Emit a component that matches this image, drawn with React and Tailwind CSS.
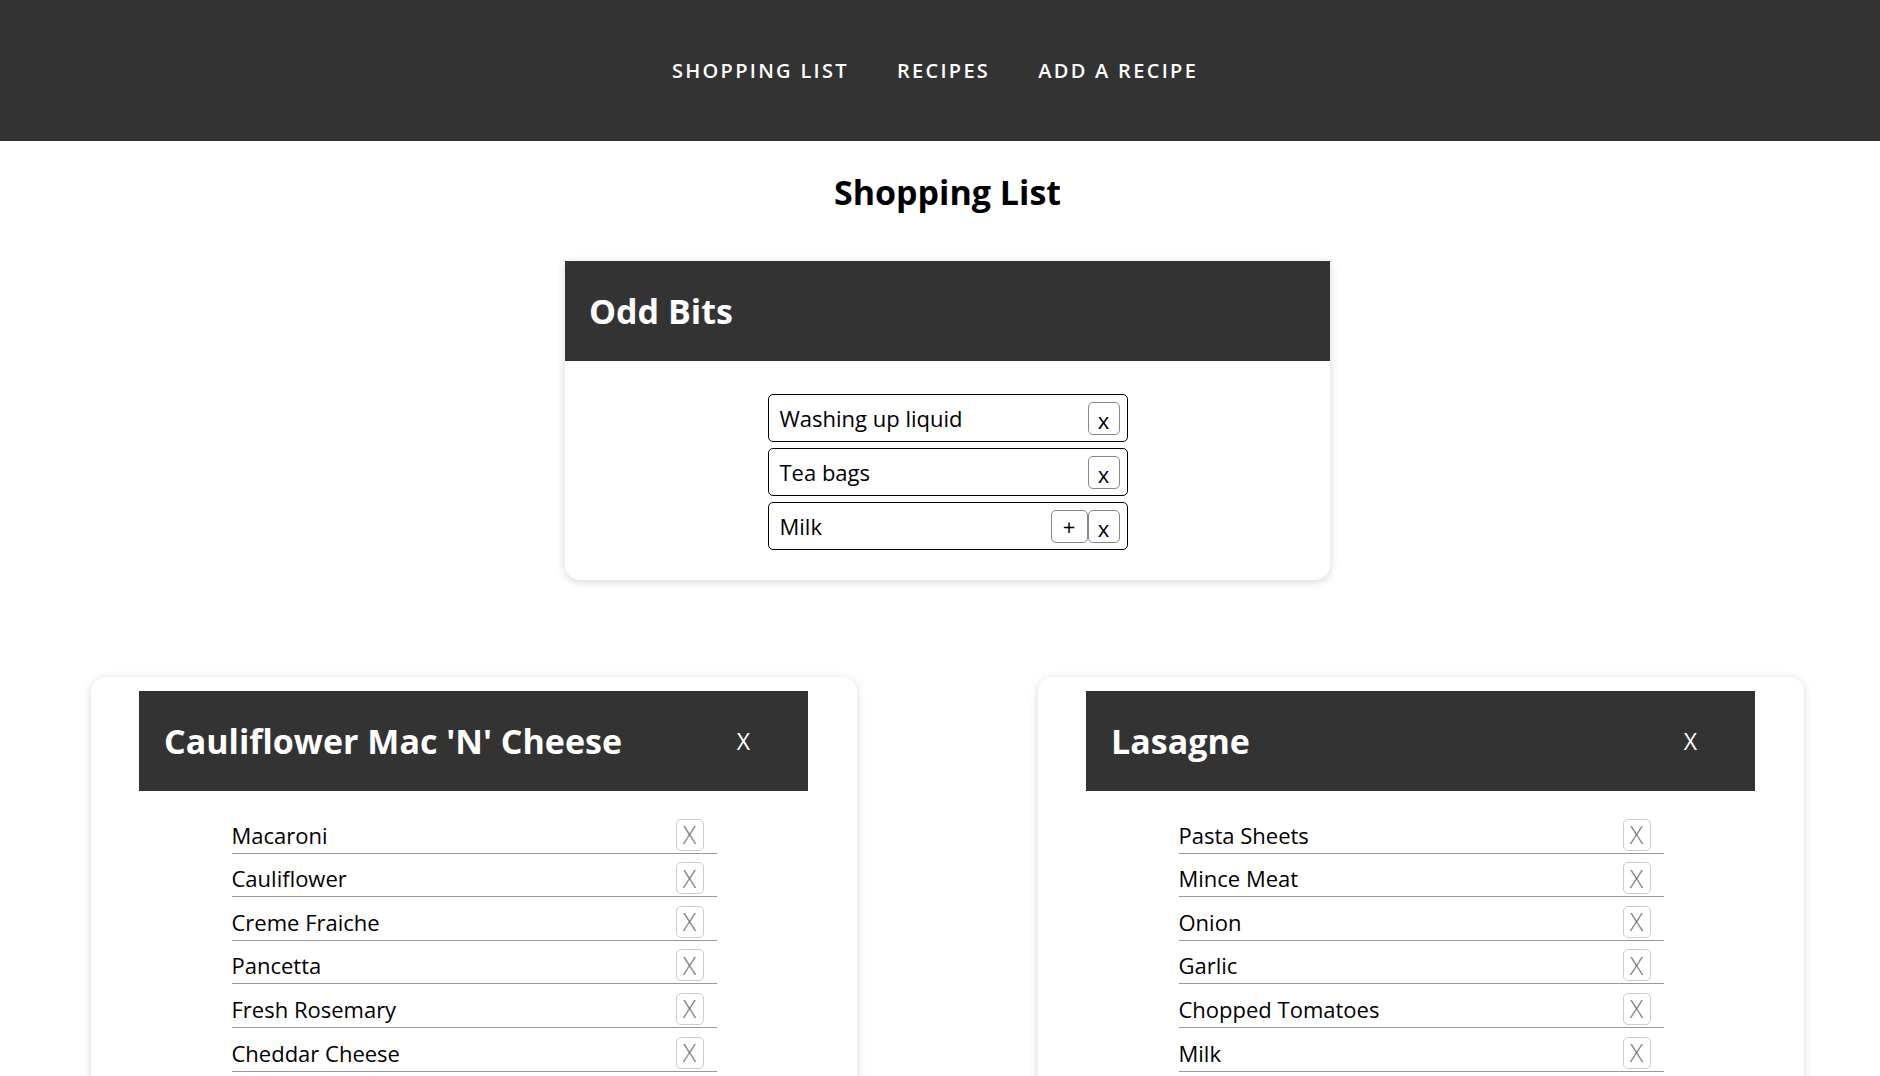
import React from "react";

const oddBits = [
  { name: "Washing up liquid", plus: false },
  { name: "Tea bags", plus: false },
  { name: "Milk", plus: true },
];

const recipes = [
  {
    title: "Cauliflower Mac 'N' Cheese",
    items: ["Macaroni", "Cauliflower", "Creme Fraiche", "Pancetta", "Fresh Rosemary", "Cheddar Cheese"],
  },
  {
    title: "Lasagne",
    items: ["Pasta Sheets", "Mince Meat", "Onion", "Garlic", "Chopped Tomatoes", "Milk"],
  },
];

function RecipeCard({ recipe }) {
  return (
    <div className="w-[766px] shrink-0 bg-white rounded-[15px] shadow-[0_2px_10px_rgba(0,0,0,0.16)] pt-[14px] pb-[30px]">
      <div className="ml-[48px] w-[669px] h-[100px] bg-[#333333] flex items-center justify-between pl-[25px] pr-[58px]">
        <span className="text-white text-[34px] font-bold leading-none">{recipe.title}</span>
        <span className="text-white text-[23px] leading-none">X</span>
      </div>
      <div className="w-[485px] mx-auto mt-[19px]">
        {recipe.items.map((it) => (
          <div key={it} className="h-[43.6px] border-b border-[#999999] flex items-end justify-between pb-[2px]">
            <span className="text-[22px] leading-none text-black mb-[5px]">{it}</span>
            <button className="w-[28px] h-[32px] mr-[13px] border border-[#cccccc] rounded-[5px] bg-white flex items-center justify-center text-[25px] font-light leading-none text-[#777777]">
              X
            </button>
          </div>
        ))}
      </div>
    </div>
  );
}

export default function App() {
  return (
    <div className="min-h-screen bg-white text-black" style={{ fontFamily: "'Open Sans', 'Noto Sans', sans-serif" }}>
      <nav className="h-[141px] bg-[#333333] flex items-center justify-center pr-[10px]">
        <ul className="flex gap-[48px] text-white text-[20px] font-semibold tracking-[2.3px] leading-none">
          <li>SHOPPING LIST</li>
          <li>RECIPES</li>
          <li>ADD A RECIPE</li>
        </ul>
      </nav>
      <main className="pl-[15px] pb-[40px]">
        <h1 className="text-center text-[34px] font-bold leading-none mt-[34px]">Shopping List</h1>
        <div className="w-[765px] mx-auto mt-[52px] bg-white rounded-b-[15px] shadow-[0_2px_10px_rgba(0,0,0,0.16)]">
          <div className="h-[100px] bg-[#333333] flex items-center pl-[24px]">
            <span className="text-white text-[34px] font-bold leading-none">Odd Bits</span>
          </div>
          <div className="pt-[33px] pb-[30px] flex flex-col items-center gap-[6px]">
            {oddBits.map((b) => (
              <div key={b.name} className="w-[360px] h-[48px] border border-black rounded-[5px] flex items-center justify-between pl-[11px] pr-[7px]">
                <span className="text-[22px] leading-none">{b.name}</span>
                <div className="flex">
                  {b.plus && (
                    <button className="w-[37px] h-[33px] border border-[#888888] rounded-[5px] bg-white flex items-center justify-center text-[22px] leading-none">
                      +
                    </button>
                  )}
                  <button className="w-[32px] h-[33px] border border-[#888888] rounded-[5px] bg-white flex items-center justify-center text-[22px] leading-none pt-[4px]">
                    x
                  </button>
                </div>
              </div>
            ))}
          </div>
        </div>
        <div className="flex justify-center gap-[181px] mt-[97px]">
          {recipes.map((r) => (
            <RecipeCard key={r.title} recipe={r} />
          ))}
        </div>
      </main>
    </div>
  );
}
